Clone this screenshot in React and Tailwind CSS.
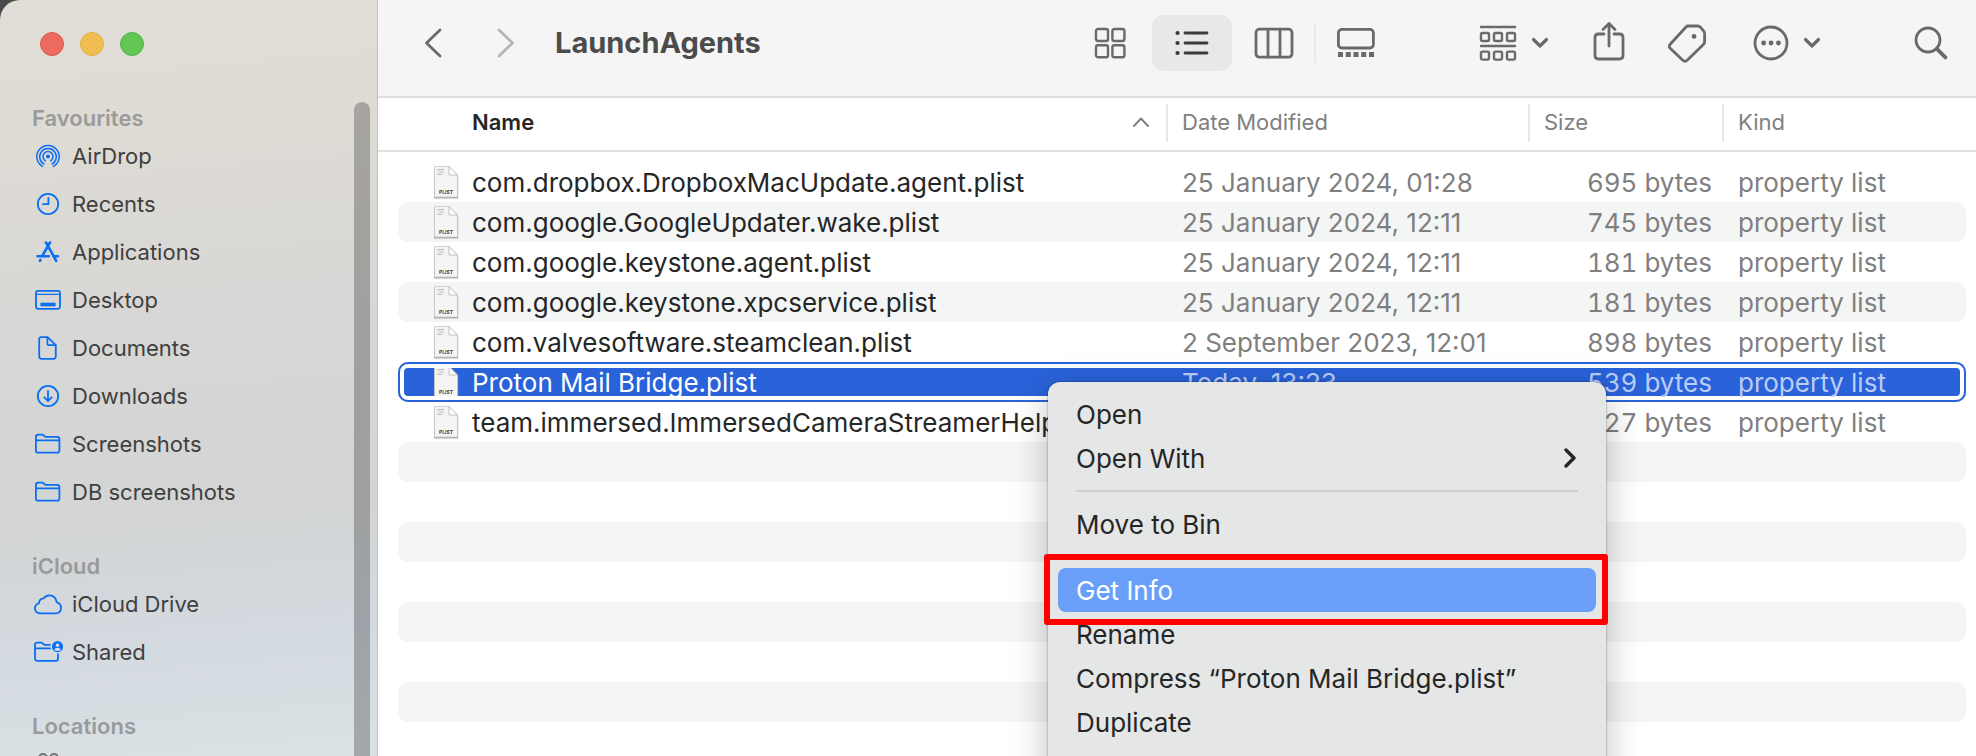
import React, { useState } from "react";

const files = [
  { name: "com.dropbox.DropboxMacUpdate.agent.plist", date: "25 January 2024, 01:28", size: "695 bytes" },
  { name: "com.google.GoogleUpdater.wake.plist", date: "25 January 2024, 12:11", size: "745 bytes" },
  { name: "com.google.keystone.agent.plist", date: "25 January 2024, 12:11", size: "181 bytes" },
  { name: "com.google.keystone.xpcservice.plist", date: "25 January 2024, 12:11", size: "181 bytes" },
  { name: "com.valvesoftware.steamclean.plist", date: "2 September 2023, 12:01", size: "898 bytes" },
  { name: "Proton Mail Bridge.plist", date: "Today, 13:23", size: "539 bytes" },
  { name: "team.immersed.ImmersedCameraStreamerHelp", date: "", size: "27 bytes" },
];

const emptyRows = [0, 1, 2, 3, 4, 5, 6, 7];

const columns = "grid grid-cols-[minmax(0,1fr)_362px_194px_244px]";

/* sidebar icons */

const SideIcon = ({ children }) => (
  <svg
    viewBox="0 0 30 26"
    className="h-[26px] w-[30px] shrink-0"
    fill="none"
    stroke="currentColor"
    strokeWidth="1.8"
    strokeLinecap="round"
    strokeLinejoin="round"
    aria-hidden="true"
  >
    {children}
  </svg>
);

const AirDropIcon = () => (
  <SideIcon>
    <circle cx="15" cy="13.5" r="2" fill="currentColor" stroke="none" />
    <path d="M12.4 17.8A5 5 0 1 1 17.6 17.8" strokeWidth="1.5" />
    <path d="M11 21A8.3 8.3 0 1 1 19 21" strokeWidth="1.5" />
    <path d="M9.6 23.4A11.2 11.2 0 1 1 20.4 23.4" strokeWidth="1.5" />
  </SideIcon>
);

const RecentsIcon = () => (
  <SideIcon>
    <circle cx="15" cy="13" r="10.2" />
    <path d="M15.4 6.8V13.2H10" />
  </SideIcon>
);

const ApplicationsIcon = () => (
  <SideIcon>
    <path d="M13 3.5L22.2 20M17 3.5L9.5 16.5" strokeWidth="2.6" />
    <path d="M4.5 17.2H15.8M20.8 17.2H25" strokeWidth="2.6" />
    <path d="M7.5 20.8L6.9 21.8M22.6 20.8L23.2 21.8" strokeWidth="2.6" />
  </SideIcon>
);

const DesktopIcon = () => (
  <SideIcon>
    <rect x="3" y="3.8" width="24" height="18" rx="2.2" />
    <path d="M3 7.4H27" strokeWidth="1.4" />
    <path d="M7.4 17.5H22.6" strokeWidth="3.6" strokeLinecap="butt" />
  </SideIcon>
);

const DocumentsIcon = () => (
  <SideIcon>
    <path d="M8.2 2.2H14.6L22.8 10.2V21.6Q22.8 23.8 20.6 23.8H8.4Q6.2 23.8 6.2 21.6V4.2Q6.2 2.2 8.2 2.2Z" />
    <path d="M14.4 2.6V8.4Q14.4 10.2 16.2 10.2H22.4" />
  </SideIcon>
);

const DownloadsIcon = () => (
  <SideIcon>
    <circle cx="15" cy="13" r="10.2" />
    <path d="M15 8V17.8M11.3 14.3L15 18L18.7 14.3" />
  </SideIcon>
);

const FolderIcon = () => (
  <SideIcon>
    <path d="M2.9 9.2V6Q2.9 3.6 5.2 3.6H9.4L12.4 5.8H24Q26.4 5.8 26.4 8.2V19.4Q26.4 21.6 24.2 21.6H5.2Q2.9 21.6 2.9 19.4V9.4H26.2" />
  </SideIcon>
);

const CloudIcon = () => (
  <SideIcon>
    <path d="M8.2 22.4Q2 22.4 2 17.2Q2 13.4 6 12.2Q6.2 7.8 10.6 7.4Q13 4 17.2 4.4Q22.8 5.2 23.6 11.2Q28 12.6 28 17Q27.8 22.2 22.6 22.4Z" />
  </SideIcon>
);

const SharedIcon = () => (
  <SideIcon>
    <path d="M17 9.4H2M17 5.8H11.4L8.6 3.6H4Q2 3.6 2 5.8V19.6Q2 21.8 4.2 21.8H23Q25 21.8 25 19.8V15.2" />
    <circle cx="24.5" cy="7.6" r="5.6" fill="currentColor" stroke="none" />
    <circle cx="24.5" cy="6.2" r="1.8" fill="#d6dbe1" stroke="none" />
    <path d="M21.2 11Q21.8 8.8 24.5 8.8Q27.2 8.8 27.8 11Q24.5 13 21.2 11Z" fill="#d6dbe1" stroke="none" />
  </SideIcon>
);

const NetworkIcon = () => (
  <SideIcon>
    <g stroke="#6f7375" strokeWidth="2">
      <circle cx="10" cy="7" r="4" />
      <circle cx="21" cy="7" r="4" />
      <path d="M3 20Q3 13 10 13Q15.5 13 15.5 18Q15.5 13 21 13Q27 13 27 20Z" />
    </g>
  </SideIcon>
);

const groups = [
  {
    title: "Favourites",
    items: [
      { label: "AirDrop", Icon: AirDropIcon },
      { label: "Recents", Icon: RecentsIcon },
      { label: "Applications", Icon: ApplicationsIcon },
      { label: "Desktop", Icon: DesktopIcon },
      { label: "Documents", Icon: DocumentsIcon },
      { label: "Downloads", Icon: DownloadsIcon },
      { label: "Screenshots", Icon: FolderIcon },
      { label: "DB screenshots", Icon: FolderIcon },
    ],
  },
  {
    title: "iCloud",
    items: [
      { label: "iCloud Drive", Icon: CloudIcon },
      { label: "Shared", Icon: SharedIcon },
    ],
  },
  {
    title: "Locations",
    items: [{ label: "Network", Icon: NetworkIcon }],
  },
];

const Sidebar = () => (
  <aside className="relative w-[378px] shrink-0 overflow-hidden rounded-tl-[20px] border-r border-[#bfc0c1] bg-[linear-gradient(175deg,#e1ded7_0%,#dedbd5_20%,#d8d7d5_40%,#d3d5d5_68%,#d4dae1_84%,#dae2e3_100%)]">
    <div className="flex gap-4 pt-8 pl-10">
      <button aria-label="Close" className="size-6 rounded-full border border-[#d9574e] bg-[#ed6a5f]" />
      <button aria-label="Minimise" className="size-6 rounded-full border border-[#e0b04a] bg-[#f1bd50]" />
      <button aria-label="Zoom" className="size-6 rounded-full border border-[#54b143] bg-[#62c655]" />
    </div>

    <nav className="mt-12 flex flex-col gap-9">
      {groups.map(({ title, items }) => (
        <section key={title}>
          <h2 className="pl-8 text-[22px] leading-7 font-semibold text-[#999a9a]">
            {title}
          </h2>
          <ul>
            {items.map(({ label, Icon }) => (
              <li key={label}>
                <a
                  href="#"
                  className="flex h-12 items-center gap-[9px] pl-[33px] text-[22px] text-[#0a6ff2]"
                >
                  <Icon />
                  <span className="text-[#404040]">{label}</span>
                </a>
              </li>
            ))}
          </ul>
        </section>
      ))}
    </nav>

    <div className="absolute top-[102px] right-[7px] -bottom-4 w-4 rounded-full bg-black/25" />
  </aside>
);

/* toolbar */

const ToolIcon = ({ className, box, width = 2.8, children }) => (
  <svg
    viewBox={box}
    className={className}
    fill="none"
    stroke="currentColor"
    strokeWidth={width}
    strokeLinecap="round"
    strokeLinejoin="round"
    aria-hidden="true"
  >
    {children}
  </svg>
);

const SmallChevron = () => (
  <ToolIcon box="0 0 18 12" className="h-3 w-[18px]" width={3.2}>
    <path d="M2.5 2.5L9 9L15.5 2.5" />
  </ToolIcon>
);

const Toolbar = () => (
  <header className="flex h-[98px] shrink-0 items-center border-b-2 border-[#dedede] bg-[#f5f5f5] pr-7 pb-2.5 pl-[46px] text-[#6a6a6a]">
    <button aria-label="Back">
      <ToolIcon box="0 0 18 30" className="h-[30px] w-[18px]">
        <path d="M16 2L2.5 15L16 28" />
      </ToolIcon>
    </button>
    <button aria-label="Forward" className="ml-[55px] text-[#b5b5b5]" disabled>
      <ToolIcon box="0 0 18 30" className="h-[30px] w-[18px]">
        <path d="M2 2L15.5 15L2 28" />
      </ToolIcon>
    </button>
    <h1 className="ml-10 text-[29px] leading-9 font-bold text-[#4b4b4b]">
      LaunchAgents
    </h1>

    <div className="ml-auto flex items-center">
      <button aria-label="Icon view">
        <ToolIcon box="0 0 32 32" className="size-8" width={2.4}>
          <rect x="2" y="2" width="12" height="12" rx="2" />
          <rect x="18.4" y="2" width="12" height="12" rx="2" />
          <rect x="2" y="18.2" width="12" height="12" rx="2" />
          <rect x="18.4" y="18.2" width="12" height="12" rx="2" />
        </ToolIcon>
      </button>
      <button
        aria-label="List view"
        aria-pressed="true"
        className="ml-[26px] flex h-14 w-20 items-center justify-center rounded-xl bg-[#e8e8e8] text-[#3a3a3a]"
      >
        <ToolIcon box="0 0 34 26" className="h-[26px] w-[34px]">
          <path d="M10 3H32M10 13H32M10 23H32" />
          <path d="M2.5 3H2.6M2.5 13H2.6M2.5 23H2.6" strokeWidth="4.2" />
        </ToolIcon>
      </button>
      <button aria-label="Column view" className="ml-[22px]">
        <ToolIcon box="0 0 40 32" className="h-8 w-10">
          <rect x="2" y="2.2" width="36" height="28" rx="3.5" />
          <path d="M14 2.5V30M26 2.5V30" />
        </ToolIcon>
      </button>
      <span className="ml-5 h-10 w-0.5 bg-[#e9e9e9]" />
      <button aria-label="Gallery view" className="ml-5">
        <ToolIcon box="0 0 40 32" className="h-8 w-10">
          <rect x="2.4" y="2.4" width="35" height="18.6" rx="3.5" />
          <path
            d="M2 27.5H7M9.8 27.5H14.8M17.5 27.5H22.5M25.2 27.5H30.2M33 27.5H38"
            strokeWidth="5"
            strokeLinecap="butt"
          />
        </ToolIcon>
      </button>

      <button aria-label="Group" className="ml-[103px] flex items-center gap-3.5">
        <ToolIcon box="0 0 38 38" className="size-[38px]" width={2.4}>
          <path d="M2 3H36M2 22H36" />
          <rect x="2" y="9" width="8" height="8" rx="1.5" />
          <rect x="15" y="9" width="8" height="8" rx="1.5" />
          <rect x="28" y="9" width="8" height="8" rx="1.5" />
          <rect x="2" y="27.6" width="8" height="8" rx="1.5" />
          <rect x="15" y="27.6" width="8" height="8" rx="1.5" />
          <rect x="28" y="27.6" width="8" height="8" rx="1.5" />
        </ToolIcon>
        <SmallChevron />
      </button>
      <button aria-label="Share" className="ml-11 pb-1">
        <ToolIcon box="0 0 32 40" className="h-10 w-8">
          <path d="M11 13H5.4Q2 13 2 16.4V34.6Q2 38 5.4 38H26.6Q30 38 30 34.6V16.4Q30 13 26.6 13H21" />
          <path d="M16 25V3M10 8.6L16 2.6L22 8.6" />
        </ToolIcon>
      </button>
      <button aria-label="Tags" className="ml-[42px]">
        <ToolIcon box="0 0 40 40" className="size-10">
          <path d="M20.8 3H30.6Q32.4 3 33.6 4.4L36.4 7.6Q37.6 9 37.6 10.8V18.6Q37.6 20.4 36.4 21.6L20.2 37.2Q18 39.2 15.8 37.2L3.4 25.4Q1.2 23.2 3.4 21L19 4Q20 3 20.8 3Z" />
          <circle cx="27" cy="13.4" r="2.4" fill="currentColor" stroke="none" />
        </ToolIcon>
      </button>
      <button aria-label="More" className="ml-[46px] flex items-center gap-3.5">
        <ToolIcon box="0 0 36 36" className="size-9">
          <circle cx="18" cy="18" r="16" />
          <path d="M10.6 18H10.7M18 18H18.1M25.4 18H25.5" strokeWidth="4.8" />
        </ToolIcon>
        <SmallChevron />
      </button>
      <button aria-label="Search" className="ml-[93px]">
        <ToolIcon box="0 0 34 34" className="size-[34px]">
          <circle cx="14" cy="14" r="12" />
          <path d="M22.8 22.8L31.4 31.4" strokeWidth="3.8" />
        </ToolIcon>
      </button>
    </div>
  </header>
);

/* file list */

const PlistIcon = ({ cropped }) => (
  <svg
    viewBox="0 0 28 36"
    className={cropped ? "h-7 w-7 shrink-0" : "h-9 w-7 shrink-0"}
    preserveAspectRatio="xMidYMid slice"
    aria-hidden="true"
  >
    <path d="M2 3.4H17.5L26.2 12V34.6H2Z" fill="#8c8c8c" opacity="0.75" />
    <path d="M2.5 2.5H17L25.5 11V33H2.5Z" fill="#f4f4f4" stroke="#c6c6c6" strokeWidth="0.8" />
    <path d="M17 2.5V11H25.5Z" fill="#fdfdfd" stroke="#b4b4b4" strokeWidth="0.8" />
    <path d="M5 5.6H12M7 8H12M5 10.2H10" stroke="#bcc3c1" strokeWidth="1.2" />
    <text
      x="14"
      y="29.6"
      textAnchor="middle"
      fontSize="5"
      fontWeight="700"
      fill="#444"
    >
      PLIST
    </text>
  </svg>
);

const HeaderCell = ({ children }) => (
  <th
    scope="col"
    className="flex h-[38px] items-center border-l-2 border-[#e6e6e6] pb-0.5 pl-3.5 font-normal"
  >
    {children}
  </th>
);

const FileTable = () => {
  const [selected, setSelected] = useState("Proton Mail Bridge.plist");

  const getRowClasses = (active, index) => {
    if (active) {
      return "bg-[#2962d9] shadow-[inset_0_0_0_2px_#2962d9,inset_0_0_0_6px_#ffffff]";
    }
    return index % 2 ? "bg-[#f4f5f5]" : "";
  };

  return (
    <table className="block whitespace-nowrap">
      <thead className="block border-b-2 border-[#e2e2e2] pr-2.5 pl-5 text-[22px] text-[#808080]">
        <tr className={`${columns} h-[52px] items-center pb-0.5`}>
          <th
            scope="col"
            aria-sort="ascending"
            className="flex h-[38px] items-center justify-between pr-4 pb-0.5 pl-[74px] font-semibold text-[#262626]"
          >
            Name
            <ToolIcon box="0 0 18 12" className="h-3 w-[18px] text-[#808080]" width={2}>
              <path d="M2 10L9 2.5L16 10" />
            </ToolIcon>
          </th>
          <HeaderCell>Date Modified</HeaderCell>
          <HeaderCell>Size</HeaderCell>
          <HeaderCell>Kind</HeaderCell>
        </tr>
      </thead>
      <tbody className="block pt-2.5 pr-2.5 pl-5 text-[26px] leading-9">
        {files.map((file, i) => {
          const active = file.name === selected;
          const muted = active ? "text-[#bccdf5]" : "text-[#7f7f7f]";

          return (
            <tr
              key={file.name}
              onClick={() => setSelected(file.name)}
              className={`${columns} h-10 items-center overflow-hidden rounded-[10px] ${getRowClasses(active, i)}`}
            >
              <td
                className={`flex items-center gap-3 overflow-hidden pl-[34px] ${
                  active ? "text-white" : "text-[#262626]"
                }`}
              >
                <PlistIcon cropped={active} />
                <span className="pt-0.5">{file.name}</span>
              </td>
              <td className={`pt-0.5 pl-4 ${muted}`}>{file.date}</td>
              <td className={`pt-0.5 pr-2.5 text-right tabular-nums ${muted}`}>
                {file.size}
              </td>
              <td className={`pt-0.5 pl-4 ${muted}`}>property list</td>
            </tr>
          );
        })}
        {emptyRows.map((i) => (
          <tr
            key={i}
            className={`block h-10 rounded-[10px] ${i % 2 ? "" : "bg-[#f4f5f5]"}`}
          />
        ))}
      </tbody>
    </table>
  );
};

/* context menu */

const MenuItem = ({ children, active, arrow }) => (
  <li role="none">
    <button
      role="menuitem"
      className={`flex h-11 w-full items-center justify-between rounded-lg px-[18px] text-[26px] ${
        active ? "bg-[#699ff8] text-white" : "text-[#262626]"
      }`}
    >
      {children}
      {arrow && (
        <ToolIcon box="0 0 16 20" className="h-5 w-4" width={3.4}>
          <path d="M4 2L12 10L4 18" />
        </ToolIcon>
      )}
    </button>
  </li>
);

const MenuDivider = ({ hidden }) => (
  <li role="separator" className="flex h-[22px] items-center px-[18px]">
    {!hidden && <span className="h-0.5 w-full bg-[#cdcfce]" />}
  </li>
);

const ContextMenu = () => (
  <div className="absolute top-[382px] left-[1048px] w-[558px] rounded-xl bg-[#e5e7e6] px-2.5 pt-2.5 pb-16 shadow-[0_0_2px_rgba(0,0,0,0.5),0_10px_36px_rgba(0,0,0,0.25)]">
    <ul role="menu">
      <MenuItem>Open</MenuItem>
      <MenuItem arrow>Open With</MenuItem>
      <MenuDivider />
      <MenuItem>Move to Bin</MenuItem>
      <MenuDivider hidden />
      <MenuItem active>Get Info</MenuItem>
      <MenuItem>Rename</MenuItem>
      <MenuItem>Compress “Proton Mail Bridge.plist”</MenuItem>
      <MenuItem>Duplicate</MenuItem>
    </ul>
    <div className="pointer-events-none absolute top-[172px] -right-0.5 -left-1 h-[71px] rounded-[3px] border-6 border-[#ff0000]" />
  </div>
);

const App = () => (
  <div className="relative flex h-screen overflow-hidden bg-[#4a4a4c] font-['Inter','Liberation_Sans',sans-serif]">
    <Sidebar />
    <main className="flex min-w-0 flex-1 flex-col bg-white">
      <Toolbar />
      <FileTable />
    </main>
    <ContextMenu />
  </div>
);

export default App;
